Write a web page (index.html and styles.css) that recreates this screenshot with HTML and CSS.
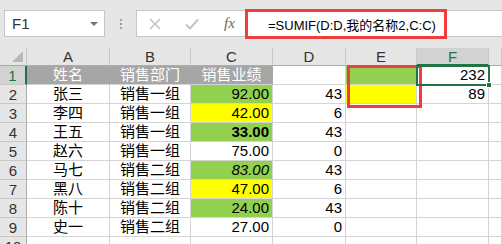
FILE: index.html
```html
<!DOCTYPE html>
<html>
<head>
<meta charset="utf-8">
<link rel="stylesheet" href="styles.css">
</head>
<body>
<div class="toolbar">
  <div class="namebox"><span class="name">F1</span><span class="caret"></span></div>
  <div class="dots"><i></i><i></i><i></i></div>
  <div class="fbox">
    <div class="fbtns">
      <svg class="ic" width="12" height="12" viewBox="0 0 12 12"><path d="M1 1L11 11M11 1L1 11" stroke="#c3c3c3" stroke-width="1.6" fill="none"/></svg>
      <svg class="ic ok" width="14" height="12" viewBox="0 0 14 12"><path d="M1 6.5L5 10.5L13 1.5" stroke="#c3c3c3" stroke-width="2" fill="none"/></svg>
      <span class="fx">fx</span>
    </div>
    <div class="formula">=SUMIF(D:D,我的名称2,C:C)</div>
  </div>
</div>
<div class="sheet">
  <div class="corner"><span class="tri"></span></div>
  <div class="ch">A</div><div class="ch">B</div><div class="ch">C</div><div class="ch">D</div><div class="ch">E</div><div class="ch sel">F</div><div class="ch"></div>

  <div class="rh sel">1</div>
  <div class="c ctr hd">姓名</div><div class="c ctr hd">销售部门</div><div class="c ctr hd">销售业绩</div><div class="c"></div><div class="c green"></div><div class="c num">232</div><div class="c"></div>

  <div class="rh">2</div>
  <div class="c ctr">张三</div><div class="c ctr">销售一组</div><div class="c num green">92.00</div><div class="c num">43</div><div class="c yellow"></div><div class="c num">89</div><div class="c"></div>

  <div class="rh">3</div>
  <div class="c ctr">李四</div><div class="c ctr">销售一组</div><div class="c num yellow">42.00</div><div class="c num">6</div><div class="c"></div><div class="c"></div><div class="c"></div>

  <div class="rh">4</div>
  <div class="c ctr">王五</div><div class="c ctr">销售一组</div><div class="c num green bold">33.00</div><div class="c num">43</div><div class="c"></div><div class="c"></div><div class="c"></div>

  <div class="rh">5</div>
  <div class="c ctr">赵六</div><div class="c ctr">销售一组</div><div class="c num">75.00</div><div class="c num">0</div><div class="c"></div><div class="c"></div><div class="c"></div>

  <div class="rh">6</div>
  <div class="c ctr">马七</div><div class="c ctr">销售二组</div><div class="c num green it">83.00</div><div class="c num">43</div><div class="c"></div><div class="c"></div><div class="c"></div>

  <div class="rh">7</div>
  <div class="c ctr">黑八</div><div class="c ctr">销售二组</div><div class="c num yellow">47.00</div><div class="c num">6</div><div class="c"></div><div class="c"></div><div class="c"></div>

  <div class="rh">8</div>
  <div class="c ctr">陈十</div><div class="c ctr">销售二组</div><div class="c num green">24.00</div><div class="c num">43</div><div class="c"></div><div class="c"></div><div class="c"></div>

  <div class="rh">9</div>
  <div class="c ctr">史一</div><div class="c ctr">销售二组</div><div class="c num">27.00</div><div class="c num">0</div><div class="c"></div><div class="c"></div><div class="c"></div>

  <div class="rh">10</div>
  <div class="c"></div><div class="c"></div><div class="c"></div><div class="c"></div><div class="c"></div><div class="c"></div><div class="c"></div>

  <div class="redbox"></div>
  <div class="selbox"><span class="handle"></span></div>
</div>
</body>
</html>
```

FILE: styles.css
```css
* { box-sizing: border-box; }
html, body { margin: 0; padding: 0; background: #fff; overflow: hidden; }
body {
  width: 502px; height: 244px;
  font-family: "Liberation Sans", "Noto Sans CJK SC", sans-serif;
  font-size: 15px; color: #000;
}
.toolbar {
  height: 48px; background: #e6e6e6;
  display: flex; align-items: flex-start; padding: 10px 0 0 4px;
}
.namebox {
  width: 101px; height: 27px; background: #fff; border: 1px solid #c6c6c6;
  display: flex; align-items: center; justify-content: space-between; padding: 0 6px 0 7px;
}
.name { font-size: 15px; color: #333; }
.caret { width: 0; height: 0; border-left: 4px solid transparent; border-right: 4px solid transparent; border-top: 4px solid #777; }
.dots { width: 31px; height: 27px; display: flex; flex-direction: column; align-items: center; justify-content: center; gap: 2px; }
.dots i { display: block; width: 2px; height: 2px; background: #a0a0a0; }
.fbox {
  flex: 1; height: 27px; background: #fff; border: 1px solid #c6c6c6; border-right: none;
  display: flex; align-items: center; position: relative;
}
.fbtns { display: flex; align-items: center; width: 108px; padding-left: 12px; }
.ic { display: block; }
.ok { margin-left: 24px; }
.fx { margin-left: 25px; font-family: "Liberation Serif", serif; font-style: italic; font-size: 15px; color: #666; }
.formula {
  position: absolute; left: 108px; top: -2px; width: 202px; height: 30px;
  border: 3px solid #f03c3c; padding-left: 20px; display: flex; align-items: center;
  font-size: 13px; color: #000; white-space: nowrap; overflow: hidden;
}
.sheet {
  position: relative;
  display: grid;
  grid-template-columns: 27px 83px 81px 82px 73px 71px 72px 1fr;
  grid-template-rows: 18px repeat(10, 19px);
}
.corner { background: #e6e6e6; border-right: 1px solid #c8c8c8; border-bottom: 1px solid #ababab; position: relative; }
.tri { position: absolute; right: 3px; bottom: 3px; width: 0; height: 0; border-left: 11px solid transparent; border-bottom: 11px solid #b8b8b8; }
.ch {
  background: #e6e6e6; border-right: 1px solid #c8c8c8; border-bottom: 1px solid #ababab;
  text-align: center; font-size: 15px; line-height: 18px; color: #333;
}
.ch.sel { background: #d2d2d2; color: #217346; border-bottom: 2px solid #217346; }
.rh {
  background: #e6e6e6; border-right: 1px solid #ababab; border-bottom: 1px solid #c8c8c8;
  text-align: center; font-size: 15px; line-height: 19px; color: #333;
}
.rh.sel { background: #d2d2d2; color: #217346; border-right: 2px solid #217346; }
.c {
  border-right: 1px solid #d4d4d4; border-bottom: 1px solid #d4d4d4;
  line-height: 18px; padding: 0 3px; white-space: nowrap; overflow: hidden;
}
.ctr { text-align: center; }
.num { text-align: right; }
.hd { background: #a6a6a6; color: #fff; border-right-color: #a6a6a6; }
.green { background: #92d050; }
.yellow { background: #ffff00; }
.bold { font-weight: bold; }
.it { font-style: italic; }
.redbox {
  position: absolute; left: 347px; top: 17px; width: 75px; height: 43px;
  border: 3px solid #f03c3c;
}
.selbox {
  position: absolute; left: 416px; top: 17px; width: 74px; height: 21px;
  border: 2px solid #217346;
}
.handle { position: absolute; right: -4px; bottom: -4px; width: 6px; height: 6px; background: #217346; border: 1px solid #fff; }
```
